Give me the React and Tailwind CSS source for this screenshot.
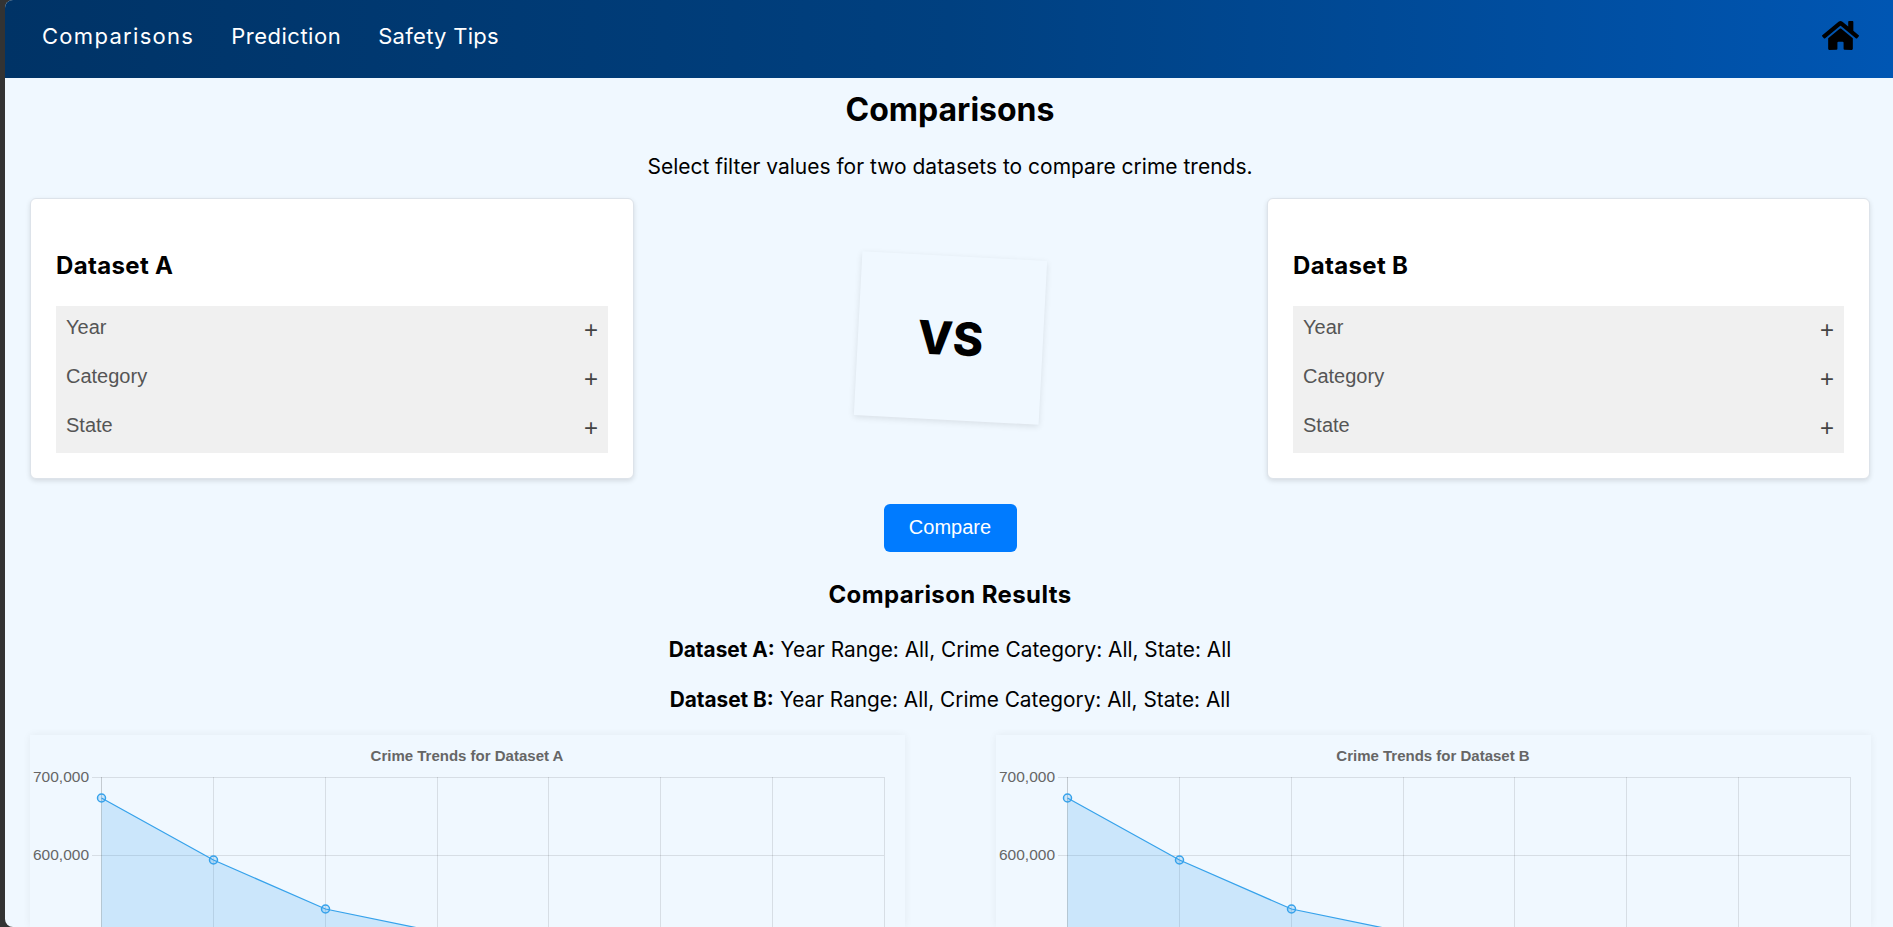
import React from 'react';
import { FaHome } from 'react-icons/fa';

const poppins = 'font-["Inter",sans-serif]';
const arial = 'font-["Liberation_Sans",Arial,sans-serif]';

const navLinks = [
  { label: 'Comparisons', spacing: 'tracking-[1.3px]' },
  { label: 'Prediction', spacing: 'tracking-[0.5px]' },
  { label: 'Safety Tips', spacing: 'tracking-[0.3px]' },
];
const filters = ['Year', 'Category', 'State'];

const points = [
  [71.5, 63],
  [183.5, 125],
  [295.5, 174],
  [407.5, 197],
  [519.5, 240],
];

function DatasetCard({ name, width }) {
  return (
    <div className={`${width} h-[281px] bg-white rounded-md border border-[#dde3ea] shadow-[0_2px_5px_rgba(0,0,0,0.12)] pt-[50px] px-[25px]`}>
      <h3 className={`${poppins} text-[24px] leading-[33px] font-bold text-black tracking-[0.35px]`}>{name}</h3>
      <div className="mt-[24px] bg-[#f0f0f0] px-[10px]">
        {filters.map(f => (
          <div key={f} className={`${arial} h-[49px] flex justify-between text-[#555] text-[20px]`}>
            <span className="pt-[9px] leading-[24px]">{f}</span>
            <span className="pt-[12px] leading-[24px] text-[#444] text-[24px]">+</span>
          </div>
        ))}
      </div>
    </div>
  );
}

function TrendChart({ name }) {
  const vertical = [0, 1, 2, 3, 4, 5, 6, 7].map(i => 71.5 + Math.round(i * 111.86));
  const line = points.map(p => p.join(',')).join(' ');
  const area = `71.5,400 ${line} 519.5,400`;
  return (
    <div className="flex-1 h-[192px] overflow-hidden bg-[#f0f8ff] shadow-[0_0_8px_rgba(0,0,0,0.06)]">
      <svg width="875" height="400" viewBox="0 0 875 400" className="block">
        <text x="437" y="26" textAnchor="middle" fill="#666" fontFamily="Liberation Sans" fontWeight="700" fontSize="15">
          {name}
        </text>
        {vertical.map((x, i) => (
          <line key={x} x1={x} x2={x} y1="42" y2="400" stroke={i === 0 ? 'rgba(0,0,0,0.18)' : 'rgba(0,0,0,0.1)'} strokeWidth="1" />
        ))}
        {[42.5, 120.5, 198.5].map(y => (
          <line key={y} x1="62" x2="854" y1={y} y2={y} stroke="rgba(0,0,0,0.1)" strokeWidth="1" />
        ))}
        <polygon points={area} fill="rgba(54,162,235,0.2)" />
        <polyline points={line} fill="none" stroke="#36a2eb" strokeWidth="1.25" />
        {points.slice(0, 3).map(([x, y]) => (
          <circle key={x} cx={x} cy={y} r="4" fill="rgba(54,162,235,0.2)" stroke="#36a2eb" strokeWidth="1.5" />
        ))}
        {[['700,000', 47], ['600,000', 125], ['500,000', 203]].map(([label, y]) => (
          <text key={label} x="59" y={y} textAnchor="end" fill="#666" fontFamily="Liberation Sans" fontSize="15.5">
            {label}
          </text>
        ))}
      </svg>
    </div>
  );
}

export default function App() {
  return (
    <div className="h-[927px] overflow-hidden bg-[#333] pl-[5px]">
      <div className="h-full overflow-hidden rounded-l-lg bg-[#f0f8ff]">
        <nav className="h-[78px] bg-gradient-to-r from-[#003366] via-[#004080] to-[#0056b3] flex items-center justify-between pl-[37px] pr-[34px]">
          <div className="flex gap-[37px] pb-[5px]">
            {navLinks.map(l => (
              <a key={l.label} href="#" className={`${poppins} ${l.spacing} text-white text-[22px] leading-[33px]`}>{l.label}</a>
            ))}
          </div>
          <FaHome className="text-black text-[37px] mb-[7px]" />
        </nav>

        <main className="pl-[25px] pr-[23px]">
          <h2 className={`${poppins} text-center text-[32px] leading-[45px] font-bold text-black mt-[9px]`}>Comparisons</h2>
          <p className={`${poppins} text-center text-[21px] leading-[30px] text-black mt-[20px]`}>
            Select filter values for two datasets to compare crime trends.
          </p>

          <div className="flex justify-between items-start mt-[16px]">
            <DatasetCard name="Dataset A" width="w-[604px]" />
            <div className={`${poppins} w-[185px] h-[164px] mt-[58px] rotate-3 flex items-center justify-center bg-[#f0f8ff] shadow-[0_2px_6px_rgba(0,0,0,0.1)] text-[46px] font-extrabold text-black`}>
              VS
            </div>
            <DatasetCard name="Dataset B" width="w-[603px]" />
          </div>

          <div className="flex justify-center mt-[25px]">
            <button className={`${arial} w-[133px] h-[48px] pb-[2px] rounded-md bg-[#007bff] text-white text-[20px]`}>Compare</button>
          </div>

          <h3 className={`${poppins} text-center text-[24px] leading-[36px] font-bold text-black tracking-[0.4px] mt-[25px]`}>Comparison Results</h3>
          <p className={`${poppins} text-center text-[20.8px] leading-[30px] text-black mt-[22px]`}>
            <strong className="font-bold">Dataset A:</strong> Year Range: All, Crime Category: All, State: All
          </p>
          <p className={`${poppins} text-center text-[20.8px] leading-[30px] text-black mt-[20px]`}>
            <strong className="font-bold">Dataset B:</strong> Year Range: All, Crime Category: All, State: All
          </p>

          <div className="flex gap-[91px] mt-[20px] -mr-px">
            <TrendChart name="Crime Trends for Dataset A" />
            <TrendChart name="Crime Trends for Dataset B" />
          </div>
        </main>
      </div>
    </div>
  );
}
